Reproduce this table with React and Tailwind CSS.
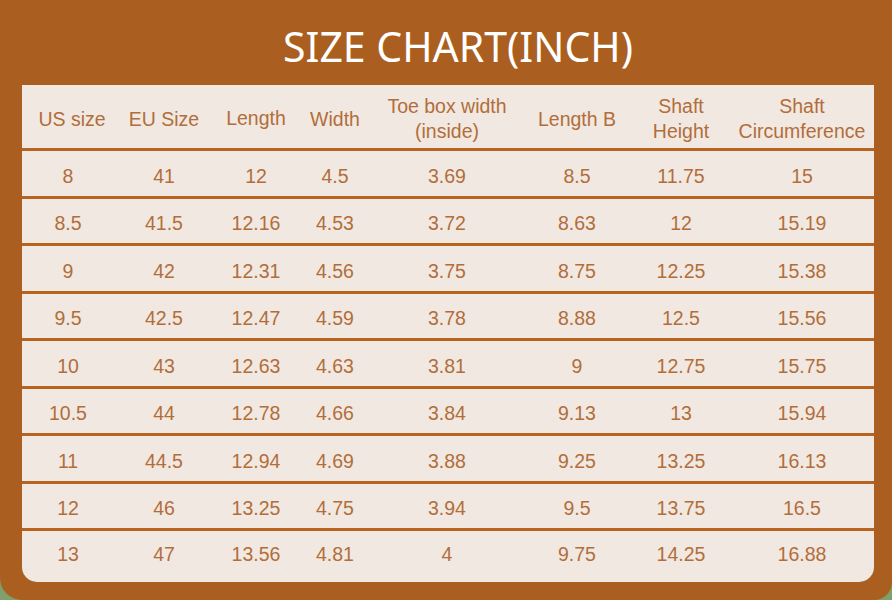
import React from "react";

const headers = [
  ["US size"],
  ["EU Size"],
  ["Length"],
  ["Width"],
  ["Toe box width", "(inside)"],
  ["Length B"],
  ["Shaft", "Height"],
  ["Shaft", "Circumference"],
];

const rows = [
  ["8", "41", "12", "4.5", "3.69", "8.5", "11.75", "15"],
  ["8.5", "41.5", "12.16", "4.53", "3.72", "8.63", "12", "15.19"],
  ["9", "42", "12.31", "4.56", "3.75", "8.75", "12.25", "15.38"],
  ["9.5", "42.5", "12.47", "4.59", "3.78", "8.88", "12.5", "15.56"],
  ["10", "43", "12.63", "4.63", "3.81", "9", "12.75", "15.75"],
  ["10.5", "44", "12.78", "4.66", "3.84", "9.13", "13", "15.94"],
  ["11", "44.5", "12.94", "4.69", "3.88", "9.25", "13.25", "16.13"],
  ["12", "46", "13.25", "4.75", "3.94", "9.5", "13.75", "16.5"],
  ["13", "47", "13.56", "4.81", "4", "9.75", "14.25", "16.88"],
];

const cols = "grid grid-cols-[92px_100px_84px_74px_150px_110px_98px_144px]";

export default function App() {
  return (
    <div className="w-[892px] h-[600px] bg-[#7fa06a]">
      <div className="w-[892px] h-[600px] bg-[#aa5f20] rounded-bl-[22px] rounded-br-[18px] flex flex-col pl-[22px]">
        <h1 className="w-[852px] h-[85px] pt-[19px] pl-[20px] text-center text-white text-[41px] leading-[54px] font-['Noto_Sans',sans-serif] font-normal">
          SIZE CHART(INCH)
        </h1>
        <div className="w-[852px] bg-[#f1e8e2] rounded-b-[15px] font-['Liberation_Sans',Arial,sans-serif] text-[#b16e3a] text-[19.5px]">
          <div className={`${cols} h-[66px] pt-[5px] border-b-[3px] border-[#b8641f] items-center text-center leading-[25px]`}>
            {headers.map((h, i) => (
              <div key={i} className={i === 2 ? "-mt-[2px]" : i === 0 ? "pl-[8px]" : ""}>
                {h.map((line, j) => (
                  <div key={j}>{line}</div>
                ))}
              </div>
            ))}
          </div>
          {rows.map((r, i) => (
            <div
              key={i}
              className={`${cols} items-center text-center ${
                i < rows.length - 1
                  ? "h-[47.5px] pt-[6px] border-b-[3px] border-[#b8641f]"
                  : "h-[51px] pb-[4px]"
              }`}
            >
              {r.map((c, j) => (
                <div key={j}>{c}</div>
              ))}
            </div>
          ))}
        </div>
      </div>
    </div>
  );
}
